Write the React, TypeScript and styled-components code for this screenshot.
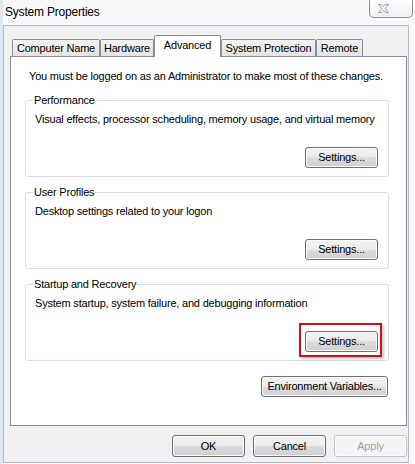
import styled, { createGlobalStyle, css } from 'styled-components';

const GlobalStyle = createGlobalStyle`
  * { box-sizing: border-box; }
  html, body { margin: 0; padding: 0; background: #f6f7f9; }
  body {
    font-family: 'Liberation Sans', Arial, sans-serif;
    font-size: 11px;
    letter-spacing: -0.2px;
    color: #000;
  }
`;

const tabs = [
  { label: 'Computer Name', width: 88 },
  { label: 'Hardware', width: 54 },
  { label: 'Advanced', width: 67, active: true },
  { label: 'System Protection', width: 95 },
  { label: 'Remote', width: 47 },
];

const groups = [
  {
    title: 'Performance',
    text: 'Visual effects, processor scheduling, memory usage, and virtual memory',
  },
  { title: 'User Profiles', text: 'Desktop settings related to your logon' },
  {
    title: 'Startup and Recovery',
    text: 'System startup, system failure, and debugging information',
    highlighted: true,
  },
];

const CloseIcon = () => (
  <svg width="11" height="9" viewBox="0 0 11 9">
    <path
      d="M0.5 0.5h3l2 2.2 2-2.2h3L7.2 4.5l3.3 4h-3l-2-2.2-2 2.2h-3l3.3-4z"
      fill="#fbfbfb"
      stroke="#9a9a9a"
      strokeWidth="1"
      strokeLinejoin="round"
    />
  </svg>
);

const App = () => {
  return (
    <>
      <GlobalStyle />
      <Frame>
        <TitleBar>
          <Caption>System Properties</Caption>
          <CloseButton aria-label="Close">
            <CloseIcon />
          </CloseButton>
        </TitleBar>
        <Client>
          <TabRow>
            {tabs.map((t) => (
              <Tab key={t.label} $width={t.width} $active={!!t.active}>
                {t.label}
              </Tab>
            ))}
          </TabRow>
          <Panel>
            <Notice>
              You must be logged on as an Administrator to make most of these changes.
            </Notice>
            {groups.map((g) => (
              <GroupBox key={g.title}>
                <Legend>{g.title}</Legend>
                <Description>{g.text}</Description>
                <GroupButton $highlighted={!!g.highlighted}>Settings...</GroupButton>
              </GroupBox>
            ))}
            <EnvButton $width={127}>Environment Variables...</EnvButton>
          </Panel>
          <ButtonBar>
            <DialogButton>OK</DialogButton>
            <DialogButton>Cancel</DialogButton>
            <DialogButton disabled>Apply</DialogButton>
          </ButtonBar>
        </Client>
      </Frame>
    </>
  );
};

const Frame = styled.div`
  width: 415px;
  height: 464px;
  display: flex;
  flex-direction: column;
  overflow: hidden;

  border-left: 3px solid #dde8f3;
  background: #f7f8fa;
`;

const TitleBar = styled.header`
  height: 25px;
  display: flex;
  justify-content: space-between;
  align-items: flex-start;
`;

const Caption = styled.h1`
  margin: 0;
  padding: 5px 0 0 2px;
  font-size: 12px;
  font-weight: normal;
  line-height: 15px;
  letter-spacing: -0.2px;
`;

const CloseButton = styled.div`
  width: 44px;
  height: 18px;
  margin-right: 2px;
  display: flex;
  align-items: center;
  padding: 0 0 1px 8px;

  border: 1px solid #8e8f94;
  border-top: none;
  border-radius: 0 0 5px 5px;
  background: linear-gradient(#fdfdfd, #eef0f2);
`;

const Client = styled.div`
  flex: 1;
  margin: 0 6px 1px 0;
  padding: 9px 1px 0 6px;
  display: flex;
  flex-direction: column;

  border: 1px solid #b4b9bf;
  background: #f0f0f0;
`;

const TabRow = styled.div`
  position: relative;
  z-index: 1;
  height: 22px;
  margin-bottom: -1px;
  padding-left: 2px;
  display: flex;
  align-items: flex-end;
`;

const Tab = styled.div<{ $width: number; $active: boolean }>`
  width: ${({ $width }) => $width}px;
  height: 17px;
  margin-bottom: 1px;
  padding-top: 1px;
  text-align: center;
  line-height: 15px;
  white-space: nowrap;

  border: 1px solid #898c95;
  border-bottom: none;
  border-radius: 2px 2px 0 0;
  background: linear-gradient(#f3f3f3, #e4e4e4);

  ${({ $active }) =>
    $active &&
    css`
      height: 22px;
      margin-bottom: 0;
      padding-top: 2px;
      background: #fff;
    `}
`;

const Panel = styled.section`
  height: 370px;
  padding: 12px 17px 0 14px;
  display: flex;
  flex-direction: column;
  gap: 8px;

  border: 1px solid #898c95;
  background: #fff;
`;

const Notice = styled.p`
  margin: 0 0 1px 4px;
  line-height: 15px;
  white-space: nowrap;
`;

const GroupBox = styled.fieldset`
  margin: 0;
  padding: 0 10px 8px 9px;
  min-width: 0;
  display: flex;
  flex-direction: column;

  border: 1px solid #d5dfe5;
  border-radius: 3px;
`;

const Legend = styled.legend`
  margin-left: -2px;
  padding: 0 1px;
  line-height: 15px;
`;

const Description = styled.p`
  margin: 4px 0 0;
  line-height: 15px;
  white-space: nowrap;
`;

const Button = styled.button<{ $width?: number; $highlighted?: boolean }>`
  position: relative;
  width: ${({ $width }) => $width ?? 73}px;
  height: 21px;
  padding: 0;
  font: inherit;
  letter-spacing: inherit;
  line-height: 15px;
  white-space: nowrap;
  color: #000;

  border: 1px solid #707070;
  border-radius: 3px;
  background: linear-gradient(#f2f2f2 0%, #ebebeb 50%, #dddddd 50%, #cfcfcf 100%);
  box-shadow: inset 0 0 0 1px #fbfbfb;

  &:disabled {
    color: #a0a0a0;
    border-color: #c1c4c7;
    background: #f4f4f4;
  }

  ${({ $highlighted }) =>
    $highlighted &&
    css`
      &::after {
        content: '';
        position: absolute;
        left: -7px;
        top: -9px;
        right: -5px;
        bottom: -6px;
        border: 2px solid #cc1016;
        box-shadow: 2px 2px 3px rgba(0, 0, 0, 0.22);
        pointer-events: none;
      }
    `}
`;

const GroupButton = styled(Button)`
  align-self: flex-end;
  margin-top: 20px;
`;

const EnvButton = styled(Button)`
  align-self: flex-end;
  margin: 7px 1px 0 0;
`;

const ButtonBar = styled.div`
  margin-top: 9px;
  display: flex;
  justify-content: flex-end;
  gap: 8px;
`;

const DialogButton = styled(Button)`
  height: 22px;
`;

export default App;
